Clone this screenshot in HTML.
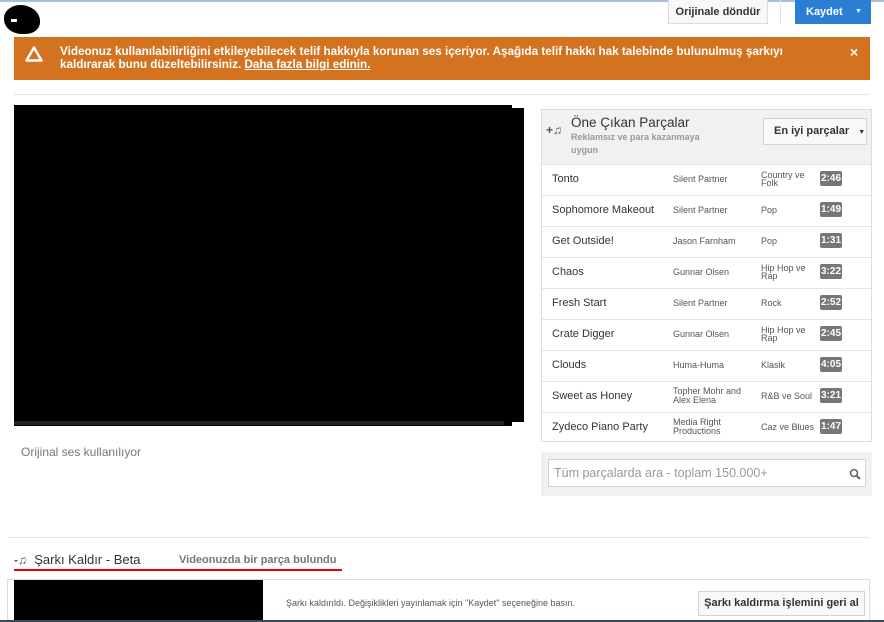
<!DOCTYPE html>
<html><head><meta charset="utf-8"><style>
*{margin:0;padding:0;box-sizing:border-box}
body{width:884px;height:622px;background:#fff;position:relative;overflow:hidden;font-family:"Liberation Sans",Arial,sans-serif;color:#333}
.a{position:absolute}
.row{position:absolute;left:542px;width:329px;height:31px;border-top:1px solid #e5e5e5;font-size:11px}
.row .t{position:absolute;left:10px;top:8px;color:#333}
.row .ar{position:absolute;left:131px;font-size:9px;color:#555;line-height:9px}
.row .g{position:absolute;left:219px;font-size:9px;color:#555;line-height:8px}
.row .d{position:absolute;left:278px;top:6px;background:#777;color:#fff;font-size:10px;padding:2px 1px;border-radius:2px;font-weight:bold;line-height:11px}
</style></head><body>
<div class="a" style="left:0;top:0;width:884px;height:2px;background:#a9bfd8"></div>
<div class="a" style="left:4px;top:5px;width:36px;height:29px;background:#000;border-radius:45% 55% 40% 50%"></div>
<div class="a" style="left:11px;top:19px;width:6px;height:3px;background:#fff"></div>
<div class="a" style="left:668px;top:0;width:100px;height:24px;border:1px solid #ddd;border-top:none;background:#f8f8f8;font-size:11px;font-weight:bold;color:#333;text-align:center;line-height:24px">Orijinale döndür</div>
<div class="a" style="left:780px;top:0;width:1px;height:24px;background:#e5e5e5"></div>
<div class="a" style="left:795px;top:0;width:76px;height:24px;background:#2a7fd4;color:#fff;font-size:11px;font-weight:bold;line-height:24px;padding-left:11px">Kaydet<span style="position:absolute;left:60px;font-size:7px">▼</span></div>
<div class="a" style="left:14px;top:37px;width:856px;height:43px;background:#d4731f;color:#fff;font-size:11.7px;font-weight:bold;line-height:13px;padding:8px 0 0 46px">
<svg class="a" style="left:11px;top:9px" width="18" height="16" viewBox="0 0 18 16"><path d="M9 1.5 L16.5 14.5 H1.5 Z" fill="none" stroke="#fff" stroke-width="2.4" stroke-linejoin="round"/></svg>
Videonuz kullanılabilirliğini etkileyebilecek telif hakkıyla korunan ses içeriyor. Aşağıda telif hakkı hak talebinde bulunulmuş şarkıyı<br>kaldırarak bunu düzeltebilirsiniz. <u>Daha fazla bilgi edinin.</u>
<span class="a" style="left:836px;top:9px;font-size:14px">×</span></div>
<div class="a" style="left:14px;top:94px;width:856px;height:1px;background:#e5e5e5"></div>
<div class="a" style="left:14px;top:105px;width:498px;height:321px;background:#000"></div>
<div class="a" style="left:14px;top:108px;width:510px;height:314px;background:#000"></div>
<div class="a" style="left:14px;top:421px;width:490px;height:4px;background:#222"></div>
<div class="a" style="left:21px;top:445px;font-size:12px;color:#777">Orijinal ses kullanılıyor</div>
<div class="a" style="left:541px;top:109px;width:331px;height:333px;border:1px solid #ddd;background:#fff"></div>
<div class="a" style="left:542px;top:110px;width:329px;height:54px;background:#f1f1f1"></div>
<div class="a" style="left:546px;top:123px;font-size:12px;font-weight:bold;color:#555">+♫</div>
<div class="a" style="left:571px;top:115px;font-size:13.5px;color:#333">Öne Çıkan Parçalar</div>
<div class="a" style="left:571px;top:131px;font-size:9px;color:#999;line-height:13px;font-weight:bold;width:150px">Reklamsız ve para kazanmaya<br>uygun</div>
<div class="a" style="left:763px;top:118px;width:104px;height:27px;border:1px solid #d3d3d3;background:#f8f8f8;font-size:11px;font-weight:bold;line-height:25px;padding-left:10px">En iyi parçalar <span style="font-size:7px;margin-left:6px">▼</span></div>
<div class="row" style="top:164px"><span class="t">Tonto</span><span class="ar" style="top:10px">Silent Partner</span><span class="g" style="top:6px">Country ve<br>Folk</span><span class="d">2:46</span></div>
<div class="row" style="top:195px"><span class="t">Sophomore Makeout</span><span class="ar" style="top:10px">Silent Partner</span><span class="g" style="top:10px">Pop</span><span class="d">1:49</span></div>
<div class="row" style="top:226px"><span class="t">Get Outside!</span><span class="ar" style="top:10px">Jason Farnham</span><span class="g" style="top:10px">Pop</span><span class="d">1:31</span></div>
<div class="row" style="top:257px"><span class="t">Chaos</span><span class="ar" style="top:10px">Gunnar Olsen</span><span class="g" style="top:6px">Hip Hop ve<br>Rap</span><span class="d">3:22</span></div>
<div class="row" style="top:288px"><span class="t">Fresh Start</span><span class="ar" style="top:10px">Silent Partner</span><span class="g" style="top:10px">Rock</span><span class="d">2:52</span></div>
<div class="row" style="top:319px"><span class="t">Crate Digger</span><span class="ar" style="top:10px">Gunnar Olsen</span><span class="g" style="top:6px">Hip Hop ve<br>Rap</span><span class="d">2:45</span></div>
<div class="row" style="top:350px"><span class="t">Clouds</span><span class="ar" style="top:10px">Huma-Huma</span><span class="g" style="top:10px">Klasik</span><span class="d">4:05</span></div>
<div class="row" style="top:381px"><span class="t">Sweet as Honey</span><span class="ar" style="top:5px">Topher Mohr and<br>Alex Elena</span><span class="g" style="top:10px">R&amp;B ve Soul</span><span class="d">3:21</span></div>
<div class="row" style="top:412px;height:29px"><span class="t">Zydeco Piano Party</span><span class="ar" style="top:5px">Media Right<br>Productions</span><span class="g" style="top:10px">Caz ve Blues</span><span class="d">1:47</span></div>
<div class="a" style="left:541px;top:452px;width:331px;height:44px;background:#f1f1f1"></div>
<div class="a" style="left:548px;top:459px;width:318px;height:28px;background:#fff;border:1px solid #d3d3d3;font-size:12.5px;color:#999;line-height:26px;padding-left:5px">Tüm parçalarda ara - toplam 150.000+
<svg class="a" style="left:300px;top:8px" width="12" height="12" viewBox="0 0 12 12"><circle cx="5" cy="5" r="3.5" fill="none" stroke="#666" stroke-width="1.6"/><path d="M7.5 7.5 L11 11" stroke="#666" stroke-width="2"/></svg></div>
<div class="a" style="left:8px;top:537px;width:862px;height:1px;background:#e5e5e5"></div>
<div class="a" style="left:14px;top:552px;font-size:13px;color:#333"><b style="font-size:12px;color:#555">-♫</b>&nbsp; Şarkı Kaldır - Beta</div>
<div class="a" style="left:179px;top:554px;font-size:11px;font-weight:bold;color:#777">Videonuzda bir parça bulundu</div>
<div class="a" style="left:14px;top:569px;width:328px;height:2px;background:#e00"></div>
<div class="a" style="left:7px;top:579px;width:863px;height:43px;border:1px solid #ddd;border-bottom:none"></div>
<div class="a" style="left:14px;top:580px;width:249px;height:42px;background:#000"></div>
<div class="a" style="left:286px;top:598px;font-size:9px;color:#555">Şarkı kaldırıldı. Değişiklikleri yayınlamak için "Kaydet" seçeneğine basın.</div>
<div class="a" style="left:698px;top:591px;width:167px;height:25px;border:1px solid #d3d3d3;background:#f8f8f8;font-size:11px;font-weight:bold;text-align:center;line-height:23px">Şarkı kaldırma işlemini geri al</div>
<div class="a" style="left:0;top:620px;width:884px;height:2px;background:#3a4a5a"></div>
</body></html>
